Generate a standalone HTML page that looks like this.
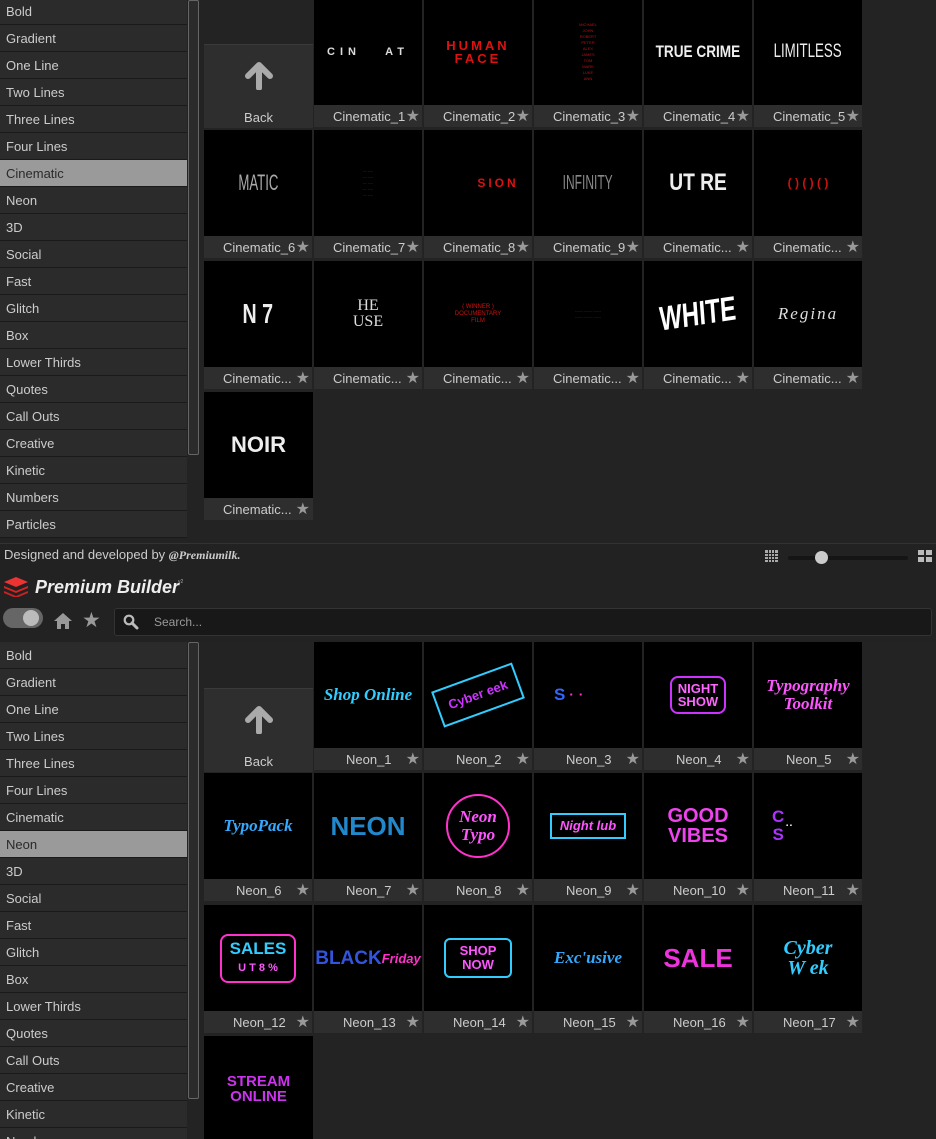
<!DOCTYPE html>
<html><head><meta charset="utf-8"><style>
*{margin:0;padding:0;box-sizing:border-box}
body{width:936px;height:1139px;overflow:hidden;background:#232323;font-family:"Liberation Sans","DejaVu Sans",sans-serif;position:relative;color:#ccc}
.panel{position:absolute;left:0;width:936px;overflow:hidden;background:#232323}
.side{position:absolute;left:0;top:0;width:187px}
.side div{height:27px;line-height:27px;padding-left:6px;font-size:13px;color:#ccc;background:#2b2b2b;border-bottom:1px solid #1a1a1a}
.side div.sel{background:#9a9a9a;color:#2a2a2a}
.sb{position:absolute;left:188px;width:11px;border:1px solid #666;border-radius:2px;background:#2b2b2b}
.t{position:absolute;width:108px;height:128px;background:#2e2e2e}
.th{position:absolute;left:0;top:0;width:108px;height:106px;background:#000;overflow:hidden;display:flex;align-items:center;justify-content:center;text-align:center}
.th i.s{font-style:normal;display:inline-block}
.lb{position:absolute;left:0;top:107px;width:108px;height:21px;line-height:22px;font-size:13px;color:#ccc;padding-left:19px;white-space:nowrap}
.lb b{position:absolute;right:2px;top:0;font-weight:normal;color:#999;font-size:16px}
.back{position:absolute;width:109px;height:84px;background:#2e2e2e;border-top:1px solid #3a3a3a}
.back span{position:absolute;left:0;width:109px;text-align:center;top:65px;font-size:13px}
.neon{font-weight:bold;font-size:17px;line-height:18px}
</style></head><body>

<!-- TOP PANEL -->
<div class="panel" style="top:0;height:543px">
<div class="side" style="top:-2px">
<div>Bold</div><div>Gradient</div><div>One Line</div><div>Two Lines</div><div>Three Lines</div><div>Four Lines</div><div class="sel">Cinematic</div><div>Neon</div><div>3D</div><div>Social</div><div>Fast</div><div>Glitch</div><div>Box</div><div>Lower Thirds</div><div>Quotes</div><div>Call Outs</div><div>Creative</div><div>Kinetic</div><div>Numbers</div><div>Particles</div>
</div>
<div class="sb" style="top:0;height:455px"></div>

<div class="back" style="left:204px;top:44px"><svg style="position:absolute;left:41px;top:17px" width="28" height="28" viewBox="0 0 28 28"><path d="M14 3 L3 14 M14 3 L25 14 M14 3 V26" stroke="#aaa" stroke-width="6" stroke-linecap="round" fill="none"/></svg><span>Back</span></div>

<div class="t" style="left:314px;top:-1px"><div class="th" style="color:#ddd;font-size:11px;letter-spacing:5px;font-weight:bold">CIN&nbsp;&nbsp;&nbsp;AT</div><div class="lb">Cinematic_1<b>★</b></div></div>
<div class="t" style="left:424px;top:-1px"><div class="th" style="color:#d11;font-size:13px;letter-spacing:3px;font-weight:bold;line-height:13px">HUMAN<br>FACE</div><div class="lb">Cinematic_2<b>★</b></div></div>
<div class="t" style="left:534px;top:-1px"><div class="th" style="color:#b11;font-size:4px;line-height:6px">MICHAEL<br>JOHN<br>ROBERT<br>PETER<br>ALEX<br>JAMES<br>TOM<br>MARK<br>LUKE<br>ANN</div><div class="lb">Cinematic_3<b>★</b></div></div>
<div class="t" style="left:644px;top:-1px"><div class="th" style="color:#eee;font-size:17px;font-weight:bold"><i class="s" style="transform:scaleX(.8)">TRUE CRIME</i></div><div class="lb">Cinematic_4<b>★</b></div></div>
<div class="t" style="left:754px;top:-1px"><div class="th" style="color:#eee;font-size:19px"><i class="s" style="transform:scaleX(.7)">LIMITLESS</i></div><div class="lb">Cinematic_5<b>★</b></div></div>

<div class="t" style="left:204px;top:130px"><div class="th" style="color:#aaa;font-size:22px"><i class="s" style="transform:scaleX(.6)">MATIC</i></div><div class="lb">Cinematic_6<b>★</b></div></div>
<div class="t" style="left:314px;top:130px"><div class="th" style="color:#a11;font-size:4px;line-height:6px">--- ----<br>--- ----<br>--- ----<br>--- ----<br>--- ----</div><div class="lb">Cinematic_7<b>★</b></div></div>
<div class="t" style="left:424px;top:130px"><div class="th" style="color:#d11;font-size:12px;letter-spacing:3px;font-weight:bold;padding-left:40px">SION</div><div class="lb">Cinematic_8<b>★</b></div></div>
<div class="t" style="left:534px;top:130px"><div class="th" style="color:#888;font-size:20px"><i class="s" style="transform:scaleX(.6)">INFINITY</i></div><div class="lb">Cinematic_9<b>★</b></div></div>
<div class="t" style="left:644px;top:130px"><div class="th" style="color:#eee;font-size:24px;font-weight:bold"><i class="s" style="transform:scaleX(.8)">UT RE</i></div><div class="lb">Cinematic...<b>★</b></div></div>
<div class="t" style="left:754px;top:130px"><div class="th" style="color:#c11;font-size:12px;font-weight:bold">( ) ( ) ( )</div><div class="lb">Cinematic...<b>★</b></div></div>

<div class="t" style="left:204px;top:261px"><div class="th" style="color:#eee;font-size:28px;font-weight:bold"><i class="s" style="transform:scaleX(.7)">N 7</i></div><div class="lb">Cinematic...<b>★</b></div></div>
<div class="t" style="left:314px;top:261px"><div class="th" style="color:#ddd;font-size:16px;line-height:16px;font-family:'Liberation Serif',serif">HE<br>USE</div><div class="lb">Cinematic...<b>★</b></div></div>
<div class="t" style="left:424px;top:261px"><div class="th" style="color:#c11;font-size:6px;line-height:7px">( WINNER )<br>DOCUMENTARY<br>FILM</div><div class="lb">Cinematic...<b>★</b></div></div>
<div class="t" style="left:534px;top:261px"><div class="th" style="color:#a11;font-size:4px;line-height:6px">------ ------ ------<br>------ ------ ------</div><div class="lb">Cinematic...<b>★</b></div></div>
<div class="t" style="left:644px;top:261px"><div class="th" style="color:#fff;font-size:34px;font-weight:bold"><i class="s" style="transform:scaleX(.7) rotate(-6deg)">WHITE</i></div><div class="lb">Cinematic...<b>★</b></div></div>
<div class="t" style="left:754px;top:261px"><div class="th" style="color:#ddd;font-size:17px;font-style:italic;font-family:'Liberation Serif',serif;letter-spacing:2px">Regina</div><div class="lb">Cinematic...<b>★</b></div></div>

<div class="t" style="left:204px;top:392px;width:109px"><div class="th" style="width:109px;color:#eee;font-size:22px;font-weight:bold">NOIR</div><div class="lb">Cinematic...<b>★</b></div></div>
</div>

<!-- HEADER -->
<div style="position:absolute;left:0;top:543px;width:936px;height:99px;background:#222;border-top:1px solid #333">
<div style="position:absolute;left:4px;top:3px;font-size:13px;color:#ccc">Designed and developed by <i style="font-family:'Liberation Serif',serif;font-weight:bold;font-size:12px">@Premiumilk.</i></div>
<svg style="position:absolute;left:765px;top:6px" width="13" height="12" viewBox="0 0 13 12"><g fill="#aaa"><rect x="0" y="0" width="13" height="12"/></g><g stroke="#222" stroke-width="1"><path d="M3.5 0V12M6.5 0V12M9.5 0V12M0 3.5H13M0 6.5H13M0 9.5H13"/></g></svg>
<div style="position:absolute;left:788px;top:12px;width:120px;height:4px;background:#151515;border-radius:2px"></div>
<div style="position:absolute;left:815px;top:7px;width:13px;height:13px;border-radius:50%;background:#ccc"></div>
<svg style="position:absolute;left:918px;top:6px" width="14" height="12" viewBox="0 0 14 12"><g fill="#bbb"><rect x="0" y="0" width="6" height="5"/><rect x="8" y="0" width="6" height="5"/><rect x="0" y="7" width="6" height="5"/><rect x="8" y="7" width="6" height="5"/></g></svg>
<svg style="position:absolute;left:4px;top:33px" width="24" height="20" viewBox="0 0 24 20"><path d="M12 0L24 5L12 10L0 5Z" fill="#e33"/><path d="M0 9L12 14L24 9L24 11L12 16L0 11Z" fill="#d22"/><path d="M0 14L12 19L24 14L24 16L12 21L0 16Z" fill="#c22"/></svg>
<div style="position:absolute;left:35px;top:33px;font-size:18px;font-weight:bold;font-style:italic;color:#eee">Premium Builder</div>
<div style="position:absolute;left:178px;top:35px;font-size:5px;color:#aaa">v2</div>
<div style="position:absolute;left:3px;top:64px;width:40px;height:20px;border-radius:10px;background:#666"></div>
<div style="position:absolute;left:23px;top:66px;width:16px;height:16px;border-radius:50%;background:#bbb"></div>
<svg style="position:absolute;left:53px;top:68px" width="20" height="18" viewBox="0 0 20 18"><path d="M10 1L1 9H4V17H8V12H12V17H16V9H19Z" fill="#999"/></svg>
<div style="position:absolute;left:82px;top:64px;font-size:21px;color:#999">★</div>
<div style="position:absolute;left:114px;top:64px;width:818px;height:28px;background:#181818;border:1px solid #333;border-radius:3px"></div>
<svg style="position:absolute;left:123px;top:70px" width="16" height="16" viewBox="0 0 16 16"><circle cx="6" cy="6" r="4.3" stroke="#bbb" stroke-width="2.2" fill="none"/><path d="M9 9L14 14" stroke="#bbb" stroke-width="3" stroke-linecap="round"/></svg>
<div style="position:absolute;left:154px;top:71px;font-size:12px;color:#999">Search...</div>
</div>

<!-- BOTTOM PANEL -->
<div class="panel" style="top:642px;height:497px">
<div class="side" style="top:0">
<div>Bold</div><div>Gradient</div><div>One Line</div><div>Two Lines</div><div>Three Lines</div><div>Four Lines</div><div>Cinematic</div><div class="sel">Neon</div><div>3D</div><div>Social</div><div>Fast</div><div>Glitch</div><div>Box</div><div>Lower Thirds</div><div>Quotes</div><div>Call Outs</div><div>Creative</div><div>Kinetic</div><div>Numbers</div>
</div>
<div class="sb" style="top:0;height:457px"></div>

<div class="back" style="left:204px;top:46px"><svg style="position:absolute;left:41px;top:17px" width="28" height="28" viewBox="0 0 28 28"><path d="M14 3 L3 14 M14 3 L25 14 M14 3 V26" stroke="#aaa" stroke-width="6" stroke-linecap="round" fill="none"/></svg><span>Back</span></div>

<div class="t" style="left:314px;top:0"><div class="th neon" style="color:#3cf;font-style:italic;font-family:'Liberation Serif',serif">Shop Online</div><div class="lb" style="padding-left:32px">Neon_1<b>★</b></div></div>
<div class="t" style="left:424px;top:0"><div class="th neon" style="color:#c3f;font-style:italic;font-size:13px"><i class="s" style="border:2px solid #3cf;padding:8px 10px;transform:rotate(-20deg)">Cyber eek</i></div><div class="lb" style="padding-left:32px">Neon_2<b>★</b></div></div>
<div class="t" style="left:534px;top:0"><div class="th neon" style="color:#36f;justify-content:flex-start;padding-left:20px">S <span style="color:#f3c;font-size:8px">&nbsp;&nbsp;▪&nbsp;&nbsp;&nbsp;▪</span></div><div class="lb" style="padding-left:32px">Neon_3<b>★</b></div></div>
<div class="t" style="left:644px;top:0"><div class="th neon" style="color:#f6f;font-size:13px;line-height:13px"><span style="border:2px solid #c3f;border-radius:8px;padding:4px 6px">NIGHT<br>SHOW</span></div><div class="lb" style="padding-left:32px">Neon_4<b>★</b></div></div>
<div class="t" style="left:754px;top:0"><div class="th neon" style="color:#f5f;font-style:italic;font-family:'Liberation Serif',serif">Typography<br>Toolkit</div><div class="lb" style="padding-left:32px">Neon_5<b>★</b></div></div>

<div class="t" style="left:204px;top:131px"><div class="th neon" style="color:#3af;font-style:italic;font-family:'Liberation Serif',serif">TypoPack</div><div class="lb" style="padding-left:32px">Neon_6<b>★</b></div></div>
<div class="t" style="left:314px;top:131px"><div class="th neon" style="color:#28c;font-size:26px">NEON</div><div class="lb" style="padding-left:32px">Neon_7<b>★</b></div></div>
<div class="t" style="left:424px;top:131px"><div class="th neon" style="color:#f5f;font-style:italic;font-family:'Liberation Serif',serif"><span style="border:2px solid #f3c;border-radius:50%;width:64px;height:64px;display:flex;align-items:center;justify-content:center">Neon<br>Typo</span></div><div class="lb" style="padding-left:32px">Neon_8<b>★</b></div></div>
<div class="t" style="left:534px;top:131px"><div class="th neon" style="color:#f5f;font-size:13px;font-style:italic"><span style="border:2px solid #3cf;padding:2px 8px">Night lub</span></div><div class="lb" style="padding-left:32px">Neon_9<b>★</b></div></div>
<div class="t" style="left:644px;top:131px"><div class="th neon" style="color:#e4e;font-size:20px;line-height:20px">GOOD<br>VIBES</div><div class="lb" style="padding-left:29px">Neon_10<b>★</b></div></div>
<div class="t" style="left:754px;top:131px"><div class="th neon" style="color:#a3f;justify-content:flex-start;padding-left:18px">C<br>S <span style="color:#fff;font-size:6px">&nbsp;▪ ▪</span></div><div class="lb" style="padding-left:29px">Neon_11<b>★</b></div></div>

<div class="t" style="left:204px;top:263px"><div class="th neon" style="color:#3cf;font-size:17px;line-height:17px"><span style="border:2px solid #f3c;border-radius:8px;padding:4px 8px">SALES<br><span style="color:#f5f;font-size:11px">U T 8 %</span></span></div><div class="lb" style="padding-left:29px">Neon_12<b>★</b></div></div>
<div class="t" style="left:314px;top:263px"><div class="th neon" style="color:#35d;font-size:19px;line-height:17px">BLACK<br><span style="color:#f3c;font-style:italic;font-size:13px">Friday</span></div><div class="lb" style="padding-left:29px">Neon_13<b>★</b></div></div>
<div class="t" style="left:424px;top:263px"><div class="th neon" style="color:#f5f;font-size:13px;line-height:14px"><span style="border:2px solid #3cf;border-radius:6px;padding:4px 14px">SHOP<br>NOW</span></div><div class="lb" style="padding-left:29px">Neon_14<b>★</b></div></div>
<div class="t" style="left:534px;top:263px"><div class="th neon" style="color:#3af;font-style:italic;font-family:'Liberation Serif',serif">Exc'usive</div><div class="lb" style="padding-left:29px">Neon_15<b>★</b></div></div>
<div class="t" style="left:644px;top:263px"><div class="th neon" style="color:#e3d;font-size:26px">SALE</div><div class="lb" style="padding-left:29px">Neon_16<b>★</b></div></div>
<div class="t" style="left:754px;top:263px"><div class="th neon" style="color:#3cf;font-style:italic;font-family:'Liberation Serif',serif;font-size:20px;line-height:20px">Cyber<br>W ek</div><div class="lb" style="padding-left:29px">Neon_17<b>★</b></div></div>

<div class="t" style="left:204px;top:394px;width:109px"><div class="th neon" style="width:109px;color:#c3e;font-size:15px;line-height:15px">STREAM<br>ONLINE</div></div>
</div>
</body></html>
